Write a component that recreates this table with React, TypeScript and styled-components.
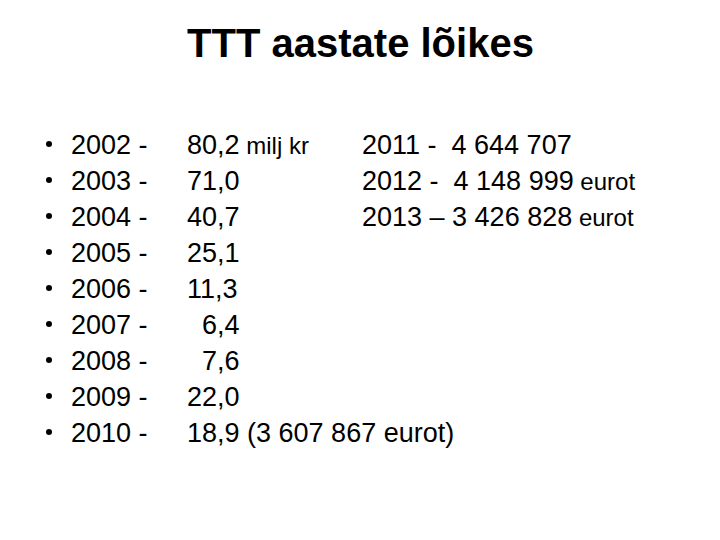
import styled, { createGlobalStyle } from "styled-components";

const GlobalStyle = createGlobalStyle`
  html, body {
    margin: 0;
    padding: 0;
    background: #fff;
  }
  body {
    font-family: "Liberation Sans", Arial, sans-serif;
    color: #000;
  }
`;

const years = ["2002", "2003", "2004", "2005", "2006", "2007", "2008", "2009", "2010"];

const values = [
  { main: "80,2", small: "milj kr" },
  { main: "71,0" },
  { main: "40,7" },
  { main: "25,1" },
  { main: "11,3" },
  { main: "  6,4" },
  { main: "  7,6" },
  { main: "22,0" },
  { main: "18,9 (3 607 867 eurot)" },
];

const euros = [
  { main: "2011 -  4 644 707" },
  { main: "2012 -  4 148 999", small: "eurot" },
  { main: "2013 – 3 426 828", small: "eurot" },
];

const App = () => {
  return (
    <>
      <GlobalStyle />
      <Slide>
        <Title>TTT aastate lõikes</Title>
        <Body>
          <YearList>
            {years.map((y) => (
              <YearItem key={y}>{y} -</YearItem>
            ))}
          </YearList>
          <Column width={175}>
            {values.map((v, idx) => (
              <Line key={idx}>
                {v.main}
                {v.small && <Small> {v.small}</Small>}
              </Line>
            ))}
          </Column>
          <Column>
            {euros.map((e, idx) => (
              <Line key={idx}>
                {e.main}
                {e.small && <Small> {e.small}</Small>}
              </Line>
            ))}
          </Column>
        </Body>
      </Slide>
    </>
  );
};

export default App;

const Slide = styled.div`
  width: 720px;
  height: 540px;
  overflow: hidden;
  display: flex;
  flex-direction: column;
`;

const Title = styled.h1`
  margin: 19px 0 0 0;
  font-size: 40px;
  line-height: 48px;
  font-weight: bold;
  text-align: center;
  padding-left: 1px;
`;

const Body = styled.div`
  display: flex;
  margin-top: 60px;
  padding-left: 46px;
  font-size: 27px;
  line-height: 36px;
`;

const YearList = styled.ul`
  list-style: none;
  margin: 0;
  padding: 0;
  width: 141px;
`;

const YearItem = styled.li`
  display: flex;
  align-items: center;
  gap: 19px;
  height: 36px;
  white-space: pre;

  &::before {
    content: "";
    width: 6px;
    height: 6px;
    border-radius: 50%;
    background: #000;
    flex-shrink: 0;
    margin-top: -2px;
  }
`;

const Column = styled.div<{ width?: number }>`
  display: flex;
  flex-direction: column;
  width: ${(p) => (p.width ? `${p.width}px` : "auto")};
`;

const Line = styled.div`
  height: 36px;
  white-space: pre;
`;

const Small = styled.span`
  font-size: 24px;
`;
